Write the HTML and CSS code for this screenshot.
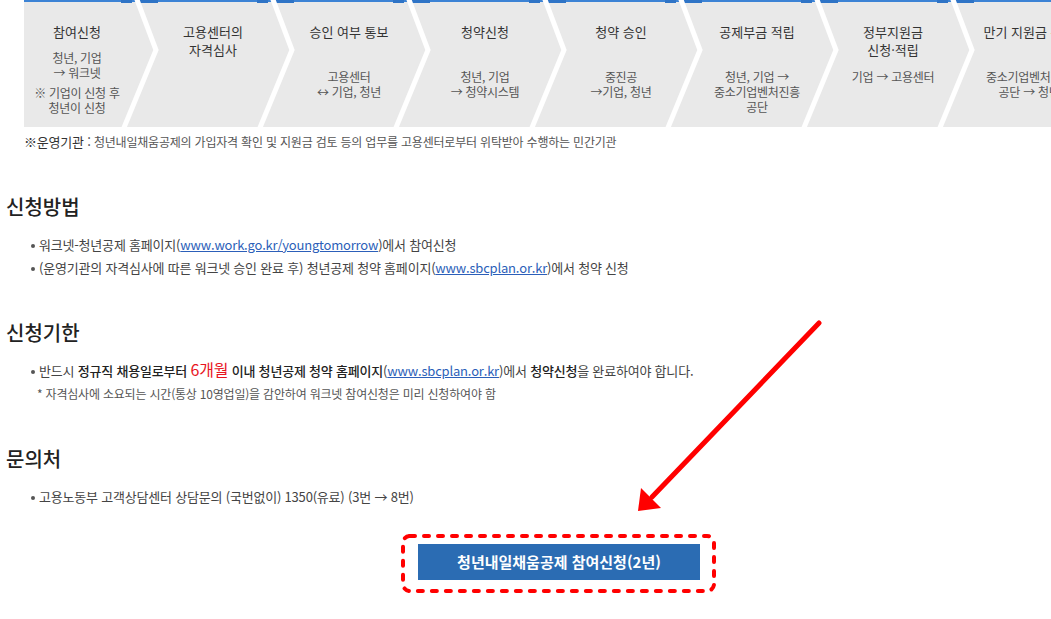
FILE: index.html
```html
<!DOCTYPE html>
<html lang="ko">
<head>
    <meta charset="UTF-8">
    <meta name="viewport" content="width=device-width, initial-scale=1.0">
    <title>청년내일채움공제 신청안내</title>
    <link rel="stylesheet" href="styles.css">
</head>
<body>
<div class="page">
    <!-- 진행 절차 -->
    <div class="process">
        <div class="process-track">
            <div class="step step-first">
                <p class="step-title">참여신청</p>
                <p class="step-desc">청년, 기업<br>→ 워크넷</p>
                <p class="step-desc step-extra">※ 기업이 신청 후<br>청년이 신청</p>
            </div>
            <div class="step">
                <p class="step-title">고용센터의<br>자격심사</p>
            </div>
            <div class="step">
                <p class="step-title">승인 여부 통보</p>
                <p class="step-desc">고용센터<br>↔ 기업, 청년</p>
            </div>
            <div class="step">
                <p class="step-title">청약신청</p>
                <p class="step-desc">청년, 기업<br>→ 청약시스템</p>
            </div>
            <div class="step">
                <p class="step-title">청약 승인</p>
                <p class="step-desc">중진공<br>→기업, 청년</p>
            </div>
            <div class="step">
                <p class="step-title">공제부금 적립</p>
                <p class="step-desc">청년, 기업 →<br>중소기업벤처진흥<br>공단</p>
            </div>
            <div class="step">
                <p class="step-title">정부지원금<br>신청·적립</p>
                <p class="step-desc">기업 → 고용센터</p>
            </div>
            <div class="step">
                <p class="step-title">만기 지원금 수령</p>
                <p class="step-desc">중소기업벤처진흥<br>공단 → 청년</p>
            </div>
        </div>
        <svg class="process-lines" width="1027" height="127" viewBox="0 0 1027 127">
            <rect x="0" y="0" width="1027" height="2" fill="#3c83d5"/>
            <g fill="#2f74c6">
                <rect x="97" y="0" width="11" height="3"/><rect x="116" y="0" width="18" height="3"/>
                <rect x="233" y="0" width="11" height="3"/><rect x="252" y="0" width="18" height="3"/>
                <rect x="369" y="0" width="11" height="3"/><rect x="388" y="0" width="18" height="3"/>
                <rect x="505" y="0" width="11" height="3"/><rect x="524" y="0" width="18" height="3"/>
                <rect x="641" y="0" width="11" height="3"/><rect x="660" y="0" width="18" height="3"/>
                <rect x="777" y="0" width="11" height="3"/><rect x="796" y="0" width="18" height="3"/>
                <rect x="913" y="0" width="11" height="3"/><rect x="932" y="0" width="18" height="3"/>
            </g>
            <g fill="none" stroke="#fff" stroke-width="5">
                <polyline points="112,-3 132,50 99,130"/>
                <polyline points="248,-3 268,50 235,130"/>
                <polyline points="384,-3 404,50 371,130"/>
                <polyline points="520,-3 540,50 507,130"/>
                <polyline points="656,-3 676,50 643,130"/>
                <polyline points="792,-3 812,50 779,130"/>
                <polyline points="928,-3 948,50 915,130"/>
            </g>
        </svg>
    </div>
    <p class="org-note"><span class="org-label">※운영기관 :</span> 청년내일채움공제의 가입자격 확인 및 지원금 검토 등의 업무를 고용센터로부터 위탁받아 수행하는 민간기관</p>

    <div class="section">
        <h2>신청방법</h2>
        <ul class="info-list">
            <li>워크넷-청년공제 홈페이지(<a href="#">www.work.go.kr/youngtomorrow</a>)에서 참여신청</li>
            <li>(운영기관의 자격심사에 따른 워크넷 승인 완료 후) 청년공제 청약 홈페이지(<a href="#">www.sbcplan.or.kr</a>)에서 청약 신청</li>
        </ul>
    </div>

    <div class="section section-term">
        <h2>신청기한</h2>
        <ul class="info-list">
            <li>반드시 <strong>정규직 채용일로부터</strong> <span class="red">6개월</span> <strong>이내 청년공제 청약 홈페이지</strong>(<a href="#">www.sbcplan.or.kr</a>)에서 <strong>청약신청</strong>을 완료하여야 합니다.</li>
        </ul>
        <p class="sub-note">* 자격심사에 소요되는 시간(통상 10영업일)을 감안하여 워크넷 참여신청은 미리 신청하여야 함</p>
    </div>

    <div class="section section-contact">
        <h2>문의처</h2>
        <ul class="info-list">
            <li>고용노동부 고객상담센터 상담문의 (국번없이) 1350(유료) (3번 → 8번)</li>
        </ul>
    </div>

    <div class="apply">
        <div class="apply-box">
            <a class="apply-btn" href="#">청년내일채움공제 참여신청(2년)</a>
            <svg class="apply-mark" width="315" height="59" viewBox="0 0 315 59">
                <rect x="2" y="2" width="311" height="55" rx="7" fill="none" stroke="#ff0000" stroke-width="4" stroke-dasharray="5 9" stroke-linecap="round"/>
            </svg>
        </div>
    </div>

    <!-- 안내 화살표 -->
    <svg class="guide-arrow" width="1051" height="619" viewBox="0 0 1051 619">
        <line x1="819" y1="323" x2="652" y2="497" stroke="#ff0000" stroke-width="5" stroke-linecap="round"/>
        <polygon points="638,511 661,508 641,488" fill="#ff0000"/>
    </svg>
</div>
</body>
</html>
```

FILE: styles.css
```css
* {
    box-sizing: border-box;
}
body {
    margin: 0;
    font-family: "Noto Sans CJK KR", "Noto Sans", sans-serif;
    color: #333;
    background: #fff;
    overflow: hidden;
}
.page {
    position: relative;
    width: 1051px;
    height: 619px;
    padding-left: 6px;
}

/* 진행 절차 */
.process {
    position: relative;
    margin-left: 18px;
    height: 127px;
    background: #e9e9e9;
    overflow: hidden;
}
.process-track {
    display: flex;
    margin-left: -15px;
}
.step {
    flex: none;
    width: 136px;
    padding-top: 23px;
    text-align: center;
}
.step p {
    margin: 0;
    white-space: nowrap;
}
.step-title {
    font-size: 13px;
    line-height: 18px;
    min-height: 36px;
    color: #333;
}
.step-desc {
    margin-top: 10px !important;
    font-size: 12px;
    line-height: 15px;
    letter-spacing: -0.3px;
    color: #555;
}
.step-first .step-title {
    min-height: 18px;
}
.step-first .step-desc {
    margin-top: 9px !important;
}
.step-first .step-extra {
    margin-top: 5px !important;
}
.process-lines {
    position: absolute;
    top: 0;
    left: 0;
}

.org-note {
    margin: 7px 0 0 18px;
    font-size: 12px;
    line-height: 16px;
    letter-spacing: -0.2px;
    color: #555;
}
.org-label {
    color: #333;
    font-size: 13px;
}

/* 본문 */
.section h2 {
    margin: 43px 0 0;
    font-size: 20px;
    line-height: 28px;
    font-weight: 500;
    color: #222;
}
.section-term h2 {
    margin-top: 40px;
}
.section-contact h2 {
    margin-top: 41px;
}
.info-list {
    list-style: none;
    margin: 12px 0 0;
    padding-left: 25px;
}
.section-term .info-list {
    margin-top: 11px;
}
.section-contact .info-list {
    margin-top: 12px;
}
.info-list li {
    font-size: 13px;
    line-height: 23px;
    letter-spacing: -0.2px;
    color: #444;
}
.info-list li::before {
    content: "";
    display: inline-block;
    width: 4px;
    height: 4px;
    margin-right: 4px;
    vertical-align: middle;
    background: #555;
    border-radius: 50%;
}
.info-list a {
    color: #2c5fb9;
    text-decoration: underline;
}
.info-list strong {
    font-weight: 500;
    color: #222;
}
.red {
    color: #e8141e;
    font-size: 16px;
}
.sub-note {
    margin: 2px 0 0 31px;
    font-size: 12px;
    line-height: 20px;
    letter-spacing: -0.2px;
    color: #555;
}

/* 신청 버튼 */
.apply {
    margin-top: 26px;
    padding-left: 395px;
}
.apply-box {
    position: relative;
    display: inline-block;
    padding: 10px 16px 13px 17px;
}
.apply-btn {
    display: block;
    width: 282px;
    height: 36px;
    line-height: 36px;
    text-align: center;
    background: #2b6cb3;
    color: #fff;
    font-size: 15px;
    font-weight: 700;
    text-decoration: none;
    letter-spacing: 0;
}
.apply-mark {
    position: absolute;
    top: 0;
    left: 0;
}
.guide-arrow {
    position: absolute;
    top: 0;
    left: 0;
    pointer-events: none;
}
```
